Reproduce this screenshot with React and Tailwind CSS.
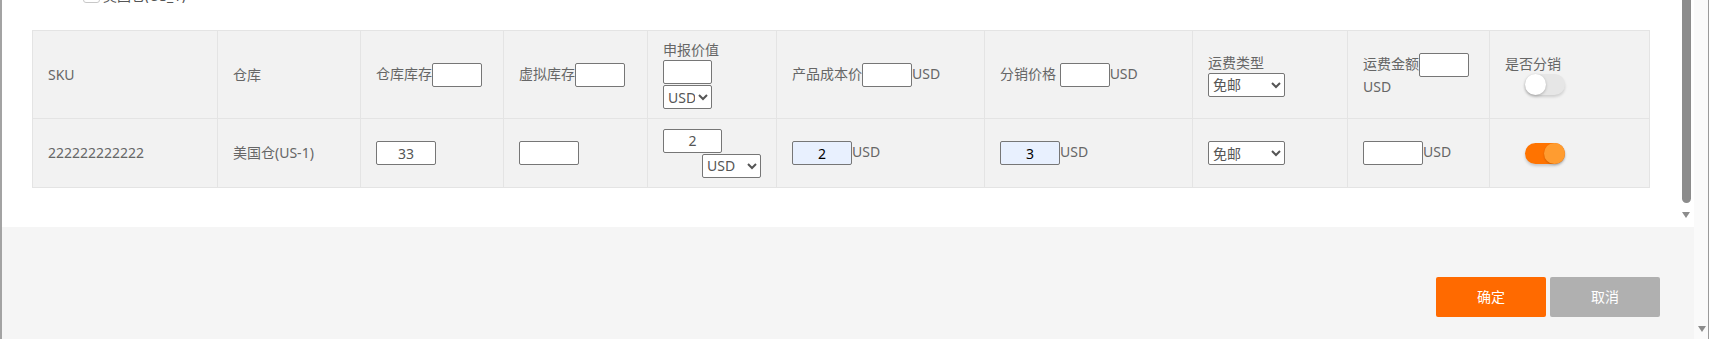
import React from "react";

const Toggle = ({ on }) =>
  on ? (
    <div className="ml-5 w-[40px] h-[21px] rounded-full bg-[#ff7300] flex justify-end shadow-[0_2px_3px_rgba(0,0,0,0.18)]">
      <div className="w-[21px] h-[21px] rounded-full bg-[#ff9c30] shadow-[0_1px_2px_rgba(0,0,0,0.2)]" />
    </div>
  ) : (
    <div className="ml-5 w-[40px] h-[21px] rounded-full bg-[#e6e6e6] flex justify-start shadow-[0_2px_3px_rgba(0,0,0,0.15)]">
      <div className="w-[21px] h-[21px] rounded-full bg-white shadow-[0_1px_3px_rgba(0,0,0,0.25)]" />
    </div>
  );

const inpBase =
  "inline-block align-middle h-[24px] border border-[#767676] rounded-[2px] text-center text-[14px] outline-none";
const inp = `${inpBase} bg-white text-[#555]`;
const inpBlue = `${inpBase} bg-[#e8f0fe] text-black`;
const sel =
  "h-[24px] border border-[#767676] rounded-[2px] bg-white text-[14px] text-[#555] outline-none";

export default function App() {
  const cols = [185, 143, 143, 144, 129, 208, 208, 155, 142, 160];
  const th = "border border-[#e4e4e4] px-[15px] py-[8px] align-middle text-left font-normal";
  const td = "border border-[#e4e4e4] px-[15px] py-[8px] align-middle text-left";
  return (
    <div className="w-[1710px] h-[339px] overflow-hidden bg-white flex font-['Noto_Sans','Noto_Sans_CJK_SC',sans-serif] text-[14px] leading-[20px] text-[#666]">
      {/* left edge strip */}
      <div className="w-[2px] h-full bg-[#a3a3a3]" />
      {/* main column */}
      <div className="w-[1692px] h-full flex flex-col">
        <div className="h-[227px] bg-white flex">
          <div className="flex-1 flex flex-col">
            <div className="h-[3px] overflow-hidden flex flex-col justify-end pl-[81px]">
              <div className="flex items-end gap-[3px]">
                <div className="w-[17px] h-[14px] border border-[#c8c8c8] rounded-[3px] bg-white" />
                <span className="leading-[14px] text-[#555]">美国仓(US_1)</span>
              </div>
            </div>
            <table className="mt-[27px] ml-[30px] w-[1617px] table-fixed border-collapse bg-[#f2f2f2]">
              <colgroup>
                {cols.map((w, i) => (
                  <col key={i} style={{ width: w }} />
                ))}
              </colgroup>
              <thead>
                <tr className="h-[88px]">
                  <th className={th}>SKU</th>
                  <th className={th}>仓库</th>
                  <th className={th}>
                    仓库库存<input className={`${inp} w-[50px]`} />
                  </th>
                  <th className={th}>
                    虚拟库存<input className={`${inp} w-[50px]`} />
                  </th>
                  <th className={th}>
                    <div>申报价值</div>
                    <input className="block h-[24px] w-[49px] border border-[#767676] rounded-[2px] bg-white" />
                    <select className={`${sel} block w-[49px] mt-[1px]`} defaultValue="USD">
                      <option>USD</option>
                    </select>
                  </th>
                  <th className={th}>
                    产品成本价<input className={`${inp} w-[50px]`} />USD
                  </th>
                  <th className={th}>
                    分销价格 <input className={`${inp} w-[50px]`} />USD
                  </th>
                  <th className={th}>
                    <div>运费类型</div>
                    <select className={`${sel} block w-[77px] h-[23px]`} defaultValue="免邮">
                      <option>免邮</option>
                    </select>
                  </th>
                  <th className={th}>
                    运费金额<input className={`${inp} w-[50px]`} />USD
                  </th>
                  <th className={th}>
                    <div>是否分销</div>
                    <Toggle on={false} />
                  </th>
                </tr>
              </thead>
              <tbody>
                <tr className="h-[69px]">
                  <td className={td}>222222222222</td>
                  <td className={td}>美国仓(US-1)</td>
                  <td className={td}>
                    <input className={`${inp} w-[60px]`} defaultValue="33" />
                  </td>
                  <td className={td}>
                    <input className={`${inp} w-[60px]`} />
                  </td>
                  <td className={td}>
                    <div className="flex flex-col">
                      <input className={`${inp} w-[59px]`} defaultValue="2" />
                      <select className={`${sel} w-[59px] self-end mt-[1px]`} defaultValue="USD">
                        <option>USD</option>
                      </select>
                    </div>
                  </td>
                  <td className={td}>
                    <input className={`${inpBlue} w-[60px]`} defaultValue="2" />USD
                  </td>
                  <td className={td}>
                    <input className={`${inpBlue} w-[60px]`} defaultValue="3" />USD
                  </td>
                  <td className={td}>
                    <select className={`${sel} w-[77px] h-[23px]`} defaultValue="免邮">
                      <option>免邮</option>
                    </select>
                  </td>
                  <td className={td}>
                    <input className={`${inp} w-[60px]`} />USD
                  </td>
                  <td className={td}>
                    <Toggle on={true} />
                  </td>
                </tr>
              </tbody>
            </table>
          </div>
          {/* inner scrollbar */}
          <div className="w-[15px] flex flex-col pl-[3px]">
            <div className="w-[9px] h-[203px] rounded-b-full bg-[#8c8c8c]" />
            <div className="mt-[9px] w-0 h-0 border-l-[4.5px] border-r-[4.5px] border-t-[6px] border-l-transparent border-r-transparent border-t-[#8c8c8c]" />
          </div>
        </div>
        {/* footer */}
        <div className="flex-1 bg-[#f5f5f5] flex justify-end items-start pt-[50px] pr-[34px] gap-[4px]">
          <button className="w-[110px] h-[40px] rounded-[2px] bg-[#ff6a00] text-white text-[14px]">确定</button>
          <button className="w-[110px] h-[40px] rounded-[2px] bg-[#b0b0b0] text-white text-[14px]">取消</button>
        </div>
      </div>
      {/* outer scrollbar */}
      <div className="w-[16px] h-full flex">
        <div className="w-[14px] h-full bg-[#fafafa] flex flex-col justify-end items-center pb-[7px] pl-[2px]">
          <div className="w-0 h-0 border-l-[4.5px] border-r-[4.5px] border-t-[6px] border-l-transparent border-r-transparent border-t-[#8c8c8c]" />
        </div>
        <div className="w-[1px] h-full bg-[#9a9a9a]" />
        <div className="w-[1px] h-full bg-white" />
      </div>
    </div>
  );
}
